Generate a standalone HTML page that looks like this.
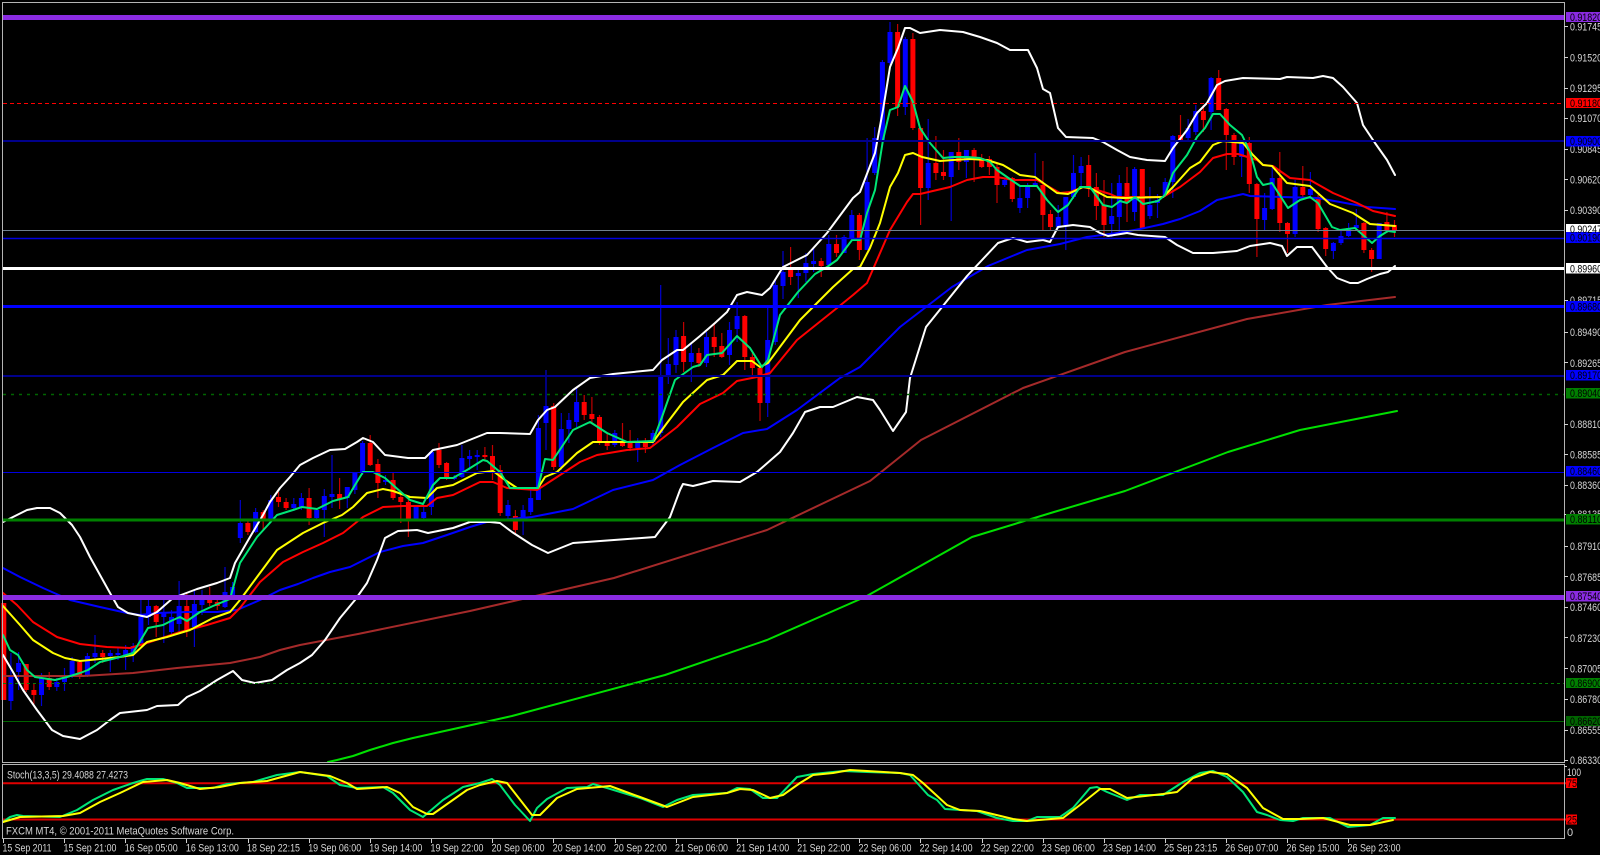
<!DOCTYPE html>
<html><head><meta charset="utf-8"><title>FXCM MT4 chart</title>
<style>
html,body{margin:0;padding:0;background:#000;width:1600px;height:855px;overflow:hidden}
svg{display:block;position:absolute;left:0;top:0}
text{font-family:"Liberation Sans",sans-serif;font-size:11px}
.l{fill:none;stroke-linejoin:round;stroke-linecap:round}
.p{fill:#d6d6d6}
.t{fill:#d6d6d6}
.b{fill:#000}
</style></head><body>
<svg width="1600" height="855" viewBox="0 0 1600 855" xmlns="http://www.w3.org/2000/svg">
<rect width="1600" height="855" fill="#000"/>

<!-- wicks -->
<path fill="none" stroke="#0000d0" stroke-width="1.2" d="M10.9 653V710M18.6 652V690M41.5 673V706M56.8 678V691M64.5 668V691M72.1 657V678M87.4 653V677M95 635V663M110.3 650V672M118 648V660M125.6 645V670M133.2 643V662M140.9 600V645M148.5 600V625M163.8 600V643M171.5 610V635M179.1 581V632M194.4 590V647M202 590V615M225 567V608M232.6 582V600M240.3 500V543M255.6 508V533M270.8 495V522M293.8 498V511M301.4 493V510M316.7 508V519M324.3 489V537M332 455V508M347.3 487V508M354.9 473V494M362.6 441V475M385.5 475V485M416.1 505V520M423.7 507V519M431.4 450V515M454.3 475V480M461.9 445V478M469.6 450V470M477.2 450V470M508 500V520M523.1 505V535M530.7 490V515M538.4 415V500M546 370V450M561.3 413V470M568.9 413V443M576.6 387V427M614.8 430V447M637.7 438V462M653 430V445M660.7 285V437M668.3 338V384M676 330V373M691.3 342V382M706.5 332V367M729.5 322V365M737.1 302V342M767.7 308V417M775.3 280V345M783 251V299M798.3 267V298M805.9 253V282M813.6 247V272M828.8 235V270M844.1 235V253M851.8 210V240M867.1 138V250M874.7 127V175M882.4 60V142M890 22V65M905.3 37V115M928.2 119V200M951.2 152V221M966.4 150V178M1004.7 178V187M1019.9 187V213M1027.6 183V208M1035.2 153V187M1058.2 205V229M1065.8 197V250M1073.5 155V199M1081.1 157V187M1111.7 183V237M1119.3 175V235M1134.6 167V221M1149.9 187V219M1157.5 194V218M1165.2 178V197M1172.8 135V198M1188.1 119V140M1195.8 105V135M1211.1 77V130M1241.6 143V177M1264.6 193V230M1272.2 167V210M1295.1 180V237M1310.4 172V197M1333.4 242V259M1341 230V245M1348.6 223V237M1356.3 209V228M1379.2 223V259"/>
<path fill="none" stroke="#c00000" stroke-width="1.2" d="M26.2 664V692M33.9 683V704M49.2 672V690M79.7 660V679M102.7 650V663M156.2 605V637M186.8 593V637M209.7 587V606M217.3 598V610M247.9 520V535M263.2 510V531M278.5 492V507M286.1 498V510M309.1 488V525M339.6 478V509M370.2 435V466M377.9 459V498M393.1 473V500M400.8 495V523M408.4 500V537M439 443V468M446.6 462V480M484.9 447V460M492.5 445V480M500.2 465V516M515.4 510V535M553.7 403V470M584.2 395V420M591.9 397V423M599.5 415V445M607.2 433V450M622.5 423V447M630.1 430V451M645.4 438V453M683.6 322V372M698.9 348V367M714.2 324V357M721.8 333V358M744.8 315V370M752.4 353V375M760 367V421M790.6 247V285M821.2 258V277M836.5 235V257M859.4 213V260M897.6 24V116M912.9 33V130M920.6 127V225M935.9 136V180M943.5 150V180M958.8 138V170M974.1 148V182M981.7 154V168M989.4 156V175M997 163V203M1012.3 177V202M1042.9 161V230M1050.5 210V230M1088.7 155V197M1096.4 173V220M1104 180V237M1127 167V222M1142.3 169V229M1180.5 115V142M1203.4 105V132M1218.7 70V110M1226.3 108V170M1234 133V165M1249.3 137V193M1256.9 183V257M1279.8 152V232M1287.5 222V253M1302.8 166V197M1318.1 195V232M1325.7 227V256M1363.9 222V253M1371.6 248V272M1386.9 212V233M1394.5 220V237"/>
<!-- bodies -->
<path fill="none" stroke="#0000ff" stroke-width="5" d="M10.9 675V701M18.6 663V672M41.5 678V695M56.8 682V687M64.5 677V682M72.1 661V675M87.4 656V675M95 653V657M110.3 653V656M118 653V655M125.6 650V655M133.2 646V653M140.9 617V643M148.5 606V617M163.8 613V617M171.5 617V632M179.1 606V624M194.4 604V627M202 598V605M225 592V607M232.6 587V595M240.3 523V538M255.6 512V532M270.8 500V520M293.8 504V508M301.4 498V507M316.7 510V518M324.3 496V510M332 494V497M347.3 487V498M354.9 473V490M362.6 443V473M385.5 480V482M416.1 507V519M423.7 512V518M431.4 452V507M454.3 477V479M461.9 458V477M469.6 456V459M477.2 455V457M508 505V516M523.1 510V520M530.7 498V512M538.4 428V500M546 406V423M561.3 429V467M568.9 420V429M576.6 402V422M614.8 433V445M637.7 443V448M653 433V442M660.7 375V433M668.3 364V376M676 337V365M691.3 353V362M706.5 337V363M729.5 330V355M737.1 316V329M767.7 340V403M775.3 285V342M783 272V286M798.3 273V276M805.9 263V273M813.6 261V264M828.8 244V265M844.1 237V253M851.8 215V238M867.1 182V250M874.7 138V173M882.4 62V140M890 32V63M905.3 39V107M928.2 163V188M951.2 152V177M966.4 150V162M1004.7 180V185M1019.9 198V208M1027.6 187V198M1035.2 183V187M1058.2 217V227M1065.8 197V225M1073.5 173V197M1081.1 166V173M1111.7 216V224M1119.3 183V217M1134.6 169V212M1149.9 205V216M1157.5 200V203M1165.2 182V195M1172.8 136V182M1188.1 128V138M1195.8 111V132M1211.1 78V112M1241.6 143V157M1264.6 208V220M1272.2 178V209M1295.1 187V234M1310.4 189V195M1333.4 243V251M1341 236V243M1348.6 228V236M1356.3 225V228M1379.2 223V259"/>
<path fill="none" stroke="#ff0000" stroke-width="5" d="M3.8 603V700M26.2 664V690M33.9 690V695M49.2 678V687M79.7 662V675M102.7 653V657M156.2 606V622M186.8 606V630M209.7 598V603M217.3 602V606M247.9 523V532M263.2 512V520M278.5 497V502M286.1 502V508M309.1 498V518M339.6 494V499M370.2 443V465M377.9 464V483M393.1 480V498M400.8 497V502M408.4 502V519M439 450V465M446.6 463V478M484.9 455V457M492.5 456V470M500.2 470V513M515.4 516V530M553.7 406V467M584.2 402V415M591.9 414V419M599.5 417V442M607.2 441V446M622.5 442V446M630.1 443V448M645.4 443V447M683.6 336V362M698.9 353V363M714.2 337V347M721.8 346V357M744.8 316V357M752.4 357V368M760 368V403M790.6 267V277M821.2 261V266M836.5 244V253M859.4 215V250M897.6 32V107M912.9 39V128M920.6 128V188M935.9 163V173M943.5 172V176M958.8 152V162M974.1 150V158M981.7 158V167M989.4 159V167M997 167V185M1012.3 178V199M1042.9 185V215M1050.5 214V227M1088.7 165V187M1096.4 187V206M1104 205V225M1127 183V203M1142.3 169V228M1180.5 135V140M1203.4 111V120M1218.7 78V110M1226.3 109V135M1234 135V157M1249.3 143V184M1256.9 184V219M1279.8 178V223M1287.5 223V234M1302.8 187V195M1318.1 197V229M1325.7 228V249M1363.9 223V250M1371.6 250V259M1386.9 222V230M1394.5 225V231"/>

<!-- long MAs -->
<polyline class="l" stroke="#00e000" stroke-width="2" points="328,762 337,760 353,756 370,750 393,743 413,738 512,716 665,675 767,640 865,597 972,537 1054,512 1125,491 1228,452 1300,430 1397,411"/>
<polyline class="l" stroke="#a52a2a" stroke-width="2" points="3,676 33,676 83,676 133,673 177,668 230,663 260,657 280,650 300,645 358,634 470,611 614,578 767,530 870,481 921,440 1023,388 1125,352 1247,319 1327,305 1395,297"/>
<polyline class="l" stroke="#0000ff" stroke-width="2" points="3,568 20,577 43,588 70,600 100,607 127,613 140,615 157,613 187,612 217,612 237,610 260,600 280,590 298,584 313,578 330,572 350,567 380,552 403,546 423,543 447,535 470,527 490,521 532,517 573,509 613,490 653,480 680,465 713,448 743,433 767,429 797,410 840,378 860,367 877,350 900,327 926,307 952,287 988,266 1027,250 1060,244 1087,237 1110,234 1123,232 1140,229 1163,224 1180,219 1200,211 1217,200 1243,194 1250,196 1317,198 1340,202 1367,207 1395,209"/>
<!-- Bollinger -->
<polyline class="l" stroke="#fff" stroke-width="2" points="3,522 13,517 27,510 37,508 50,508 60,513 72,525 80,537 90,557 100,575 110,593 118,607 128,613 147,617 157,612 173,598 197,589 217,583 230,578 235,563 250,537 263,515 270,502 280,488 290,477 300,465 313,458 330,450 345,449 357,442 363,438 373,442 385,455 408,458 425,458 433,450 457,445 487,433 500,433 530,434 538,420 547,410 555,407 573,390 590,378 613,374 653,370 662,360 677,350 683,350 700,336 715,323 727,312 737,295 747,292 762,295 770,288 783,267 807,255 827,233 853,198 860,192 875,153 883,110 890,67 898,48 905,28 910,28 920,33 940,30 963,32 980,37 997,43 1010,50 1028,50 1037,68 1043,89 1050,93 1058,128 1066,137 1093,138 1103,142 1117,150 1130,157 1147,160 1165,161 1173,148 1187,130 1197,113 1207,103 1217,85 1225,81 1243,78 1280,79 1287,77 1313,78 1323,76 1333,78 1343,87 1357,103 1363,125 1375,143 1387,160 1395,175"/>
<polyline class="l" stroke="#fff" stroke-width="2" points="3,655 13,672 23,690 37,710 52,730 63,736 80,739 97,730 110,720 120,713 147,710 157,706 178,705 187,697 200,691 217,680 233,671 242,680 255,683 272,680 287,670 300,663 312,655 325,640 340,618 355,600 367,583 377,560 385,538 398,531 417,530 428,533 453,528 470,522 490,522 500,523 512,532 532,545 548,553 573,543 614,540 655,537 670,517 680,490 683,484 693,486 713,481 740,482 757,472 780,452 793,433 805,412 820,407 833,407 857,397 873,400 880,410 893,431 906,412 910,378 926,327 967,276 998,243 1013,238 1027,242 1043,240 1050,242 1058,227 1073,225 1090,227 1100,233 1108,236 1127,233 1138,235 1165,237 1177,245 1193,253 1213,253 1237,251 1250,246 1270,243 1282,246 1287,256 1297,247 1312,247 1327,267 1337,278 1350,283 1358,283 1367,279 1380,274 1388,272 1395,266"/>
<!-- fast MAs -->
<polyline class="l" stroke="#ff0000" stroke-width="2" points="3,593 17,605 33,622 57,637 80,644 107,647 130,648 147,643 180,632 207,625 230,618 240,608 260,582 283,562 303,552 323,543 343,533 363,517 383,507 403,506 427,506 437,498 453,495 480,482 493,482 507,488 537,490 557,477 580,462 597,455 627,450 650,448 677,427 700,404 723,393 737,381 757,377 770,373 797,340 837,308 853,295 867,283 877,260 890,230 907,202 913,194 920,194 950,187 967,180 983,177 997,177 1013,180 1037,180 1060,193 1070,192 1083,187 1097,190 1110,194 1117,197 1163,197 1180,187 1200,172 1213,158 1227,154 1238,154 1257,160 1263,165 1273,166 1290,178 1310,180 1333,193 1357,203 1373,211 1395,216"/>
<polyline class="l" stroke="#ffff00" stroke-width="2" points="3,606 20,625 33,640 53,653 65,658 80,661 100,659 120,657 133,655 147,642 167,637 190,630 213,618 230,612 240,600 257,577 277,550 303,533 323,523 342,515 353,507 367,493 383,489 393,491 410,497 427,498 437,488 453,485 477,473 493,471 505,480 517,488 538,488 545,477 557,472 577,453 593,442 627,442 653,442 667,423 683,402 707,380 723,375 737,361 752,361 760,367 768,363 800,320 833,287 853,269 860,267 870,248 880,223 890,187 898,173 905,155 913,153 922,157 940,161 953,160 970,159 987,160 1003,165 1020,175 1035,177 1057,193 1068,194 1083,187 1090,188 1107,197 1123,198 1163,197 1173,187 1190,168 1200,162 1213,145 1223,141 1243,143 1253,155 1263,165 1272,166 1287,183 1310,186 1330,204 1353,213 1370,224 1395,226"/>
<polyline class="l" stroke="#00e676" stroke-width="2" points="3,635 10,650 18,655 27,670 35,677 55,680 67,677 80,673 88,670 100,662 120,657 133,653 148,628 163,625 173,620 180,617 187,621 200,612 213,606 230,599 240,563 257,537 277,515 293,510 302,507 317,509 333,501 348,497 355,485 363,472 373,472 385,478 402,493 410,500 423,504 433,485 440,478 453,478 467,470 483,460 487,461 500,472 510,488 538,488 545,459 553,460 573,430 590,422 607,433 627,442 653,441 662,417 675,380 693,367 700,365 707,355 722,353 737,336 750,348 762,367 768,360 780,315 798,292 815,274 827,267 837,260 852,240 860,240 867,213 875,190 883,140 890,110 898,107 905,86 913,102 920,128 930,143 943,158 953,157 967,157 980,158 990,162 997,170 1007,177 1020,186 1037,186 1047,200 1058,212 1068,205 1080,187 1090,187 1103,205 1112,207 1120,201 1127,203 1135,197 1143,204 1158,201 1165,195 1173,173 1187,155 1197,137 1205,128 1213,114 1220,114 1230,125 1242,135 1250,152 1257,177 1263,185 1272,183 1288,208 1300,200 1310,197 1318,203 1332,227 1340,230 1355,228 1372,243 1380,236 1388,231 1395,232"/>

<!-- horizontal objects -->
<g fill="none">
<path d="M3 17.5H1564" stroke="#8a2be2" stroke-width="5"/>
<path d="M3 103.5H1564" stroke="#ff0000" stroke-width="1" stroke-dasharray="4 3"/>
<path d="M3 141H1564" stroke="#00008b" stroke-width="2"/>
<path d="M3 230.5H1564" stroke="#708090" stroke-width="1"/>
<path d="M3 238.5H1564" stroke="#0000e0" stroke-width="1.4"/>
<path d="M3 268.5H1564" stroke="#fff" stroke-width="3"/>
<path d="M3 306.5H1564" stroke="#0000ff" stroke-width="3"/>
<path d="M3 376H1564" stroke="#00008b" stroke-width="2"/>
<path d="M3 394.5H1564" stroke="#006400" stroke-width="1.4" stroke-dasharray="3 5"/>
<path d="M3 472.5H1564" stroke="#0000e0" stroke-width="1"/>
<path d="M3 520H1564" stroke="#008000" stroke-width="3"/>
<path d="M3 597.5H1564" stroke="#8a2be2" stroke-width="5"/>
<path d="M3 683.5H1564" stroke="#0a780a" stroke-width="1" stroke-dasharray="3 3"/>
<path d="M3 721.5H1564" stroke="#006400" stroke-width="1"/>
</g>

<!-- stochastic -->
<path fill="none" stroke="#e00000" stroke-width="2" d="M3 783.3H1566M3 819.5H1566"/>
<polyline class="l" stroke="#00e676" stroke-width="2" points="3,822 10,817 17,815 23,816 60,817 77,810 93,800 113,790 133,783 147,779 163,779 177,783 187,788 213,788 227,784 253,782 277,775 300,772 327,776 340,785 357,788 383,787 393,793 400,800 410,810 423,817 443,800 463,787 480,783 492,779 500,785 515,805 530,821 537,808 547,799 567,788 587,787 593,784 607,788 640,798 663,807 677,800 693,795 727,793 737,788 750,789 763,798 777,798 797,777 813,774 843,771 867,772 900,773 910,775 928,795 937,800 945,809 977,811 997,818 1013,821 1027,821 1037,817 1060,817 1073,808 1090,788 1097,787 1107,792 1127,800 1140,795 1163,795 1183,782 1200,773 1213,771 1227,777 1243,792 1257,812 1267,815 1280,820 1293,821 1303,818 1330,818 1348,827 1370,825 1383,818 1395,818"/>
<polyline class="l" stroke="#ffff00" stroke-width="2" points="3,822 20,817 63,816 80,813 100,802 120,793 143,782 167,780 180,783 200,789 220,787 240,783 267,781 300,772 330,776 347,783 357,789 387,787 400,793 413,807 427,814 433,814 467,790 480,785 497,781 507,783 532,815 540,815 557,798 577,789 610,786 640,797 667,807 693,797 727,793 740,789 753,790 770,798 783,795 800,783 813,775 833,773 850,770 867,771 900,773 913,775 923,783 947,805 960,810 980,811 1013,819 1027,821 1063,818 1080,805 1100,789 1110,789 1127,798 1163,794 1177,792 1193,778 1210,772 1227,774 1247,788 1263,808 1283,819 1300,819 1323,818 1350,825 1370,825 1393,820"/>

<!-- frames -->
<g fill="none" stroke="#b4b4b4" stroke-width="1">
<path d="M2.5 2.5H1564.5V762.5H2.5Z"/>
<path d="M2.5 764.5H1564.5V838.5H2.5Z"/>
</g>
<path fill="none" stroke="#d0d0d0" d="M1564 26.5h4M1564 57.5h4M1564 88.5h4M1564 118.5h4M1564 149.5h4M1564 179.5h4M1564 210.5h4M1564 300.5h4M1564 332.5h4M1564 362.5h4M1564 424.5h4M1564 454.5h4M1564 485.5h4M1564 514.5h4M1564 546.5h4M1564 576.5h4M1564 607.5h4M1564 637.5h4M1564 668.5h4M1564 699.5h4M1564 730.5h4M1564 760.5h4M1564 766.5h3M3.5 839v4M64.5 839v4M125.5 839v4M186.5 839v4M248.5 839v4M309.5 839v4M370.5 839v4M431.5 839v4M492.5 839v4M553.5 839v4M615.5 839v4M676.5 839v4M737.5 839v4M798.5 839v4M859.5 839v4M920.5 839v4M982.5 839v4M1043.5 839v4M1104.5 839v4M1165.5 839v4M1226.5 839v4M1287.5 839v4M1348.5 839v4"/>

<!-- axis prices -->
<g class="p">
<text x="1570" y="30.5" textLength="32" lengthAdjust="spacingAndGlyphs">0.91745</text>
<text x="1570" y="61.5" textLength="32" lengthAdjust="spacingAndGlyphs">0.91520</text>
<text x="1570" y="92" textLength="32" lengthAdjust="spacingAndGlyphs">0.91295</text>
<text x="1570" y="122" textLength="32" lengthAdjust="spacingAndGlyphs">0.91070</text>
<text x="1570" y="153" textLength="32" lengthAdjust="spacingAndGlyphs">0.90845</text>
<text x="1570" y="183.5" textLength="32" lengthAdjust="spacingAndGlyphs">0.90620</text>
<text x="1570" y="214" textLength="32" lengthAdjust="spacingAndGlyphs">0.90390</text>
<text x="1570" y="304" textLength="32" lengthAdjust="spacingAndGlyphs">0.89715</text>
<text x="1570" y="336" textLength="32" lengthAdjust="spacingAndGlyphs">0.89490</text>
<text x="1570" y="367" textLength="32" lengthAdjust="spacingAndGlyphs">0.89265</text>
<text x="1570" y="428" textLength="32" lengthAdjust="spacingAndGlyphs">0.88810</text>
<text x="1570" y="458.5" textLength="32" lengthAdjust="spacingAndGlyphs">0.88585</text>
<text x="1570" y="489" textLength="32" lengthAdjust="spacingAndGlyphs">0.88360</text>
<text x="1570" y="518" textLength="32" lengthAdjust="spacingAndGlyphs">0.88135</text>
<text x="1570" y="550" textLength="32" lengthAdjust="spacingAndGlyphs">0.87910</text>
<text x="1570" y="581" textLength="32" lengthAdjust="spacingAndGlyphs">0.87685</text>
<text x="1570" y="611" textLength="32" lengthAdjust="spacingAndGlyphs">0.87460</text>
<text x="1570" y="642" textLength="32" lengthAdjust="spacingAndGlyphs">0.87230</text>
<text x="1570" y="672.5" textLength="32" lengthAdjust="spacingAndGlyphs">0.87005</text>
<text x="1570" y="703" textLength="32" lengthAdjust="spacingAndGlyphs">0.86780</text>
<text x="1570" y="734" textLength="32" lengthAdjust="spacingAndGlyphs">0.86555</text>
<text x="1570" y="764" textLength="32" lengthAdjust="spacingAndGlyphs">0.86330</text>
<text x="1567" y="776" textLength="14" lengthAdjust="spacingAndGlyphs">100</text>
<text x="1567" y="836">0</text>
</g>
<!-- axis boxes -->
<g>
<rect x="1566" y="12" width="34" height="10" fill="#8a2be2"/>
<rect x="1566" y="98" width="34" height="10" fill="#ff0000"/>
<rect x="1566" y="136" width="34" height="10.5" fill="#0000ff"/>
<rect x="1566" y="224" width="34" height="10" fill="#ffffff"/>
<rect x="1566" y="232" width="34" height="11" fill="#0000ff"/>
<rect x="1566" y="263" width="34" height="10.5" fill="#ffffff"/>
<rect x="1566" y="301" width="34" height="11" fill="#0000ff"/>
<rect x="1566" y="370" width="34" height="10.5" fill="#0000ff"/>
<rect x="1566" y="388" width="34" height="10.5" fill="#008000"/>
<rect x="1566" y="466" width="34" height="10.5" fill="#0000ff"/>
<rect x="1566" y="514" width="34" height="10.5" fill="#008000"/>
<rect x="1566" y="591" width="34" height="10.5" fill="#8a2be2"/>
<rect x="1566" y="678" width="34" height="10" fill="#008000"/>
<rect x="1566" y="716" width="34" height="10" fill="#006400"/>
<rect x="1566" y="778" width="11" height="10" fill="#ff0000"/>
<rect x="1566" y="814.5" width="11" height="10" fill="#ff0000"/>
</g>
<g class="b">
<text x="1570" y="21" textLength="32" lengthAdjust="spacingAndGlyphs">0.91820</text>
<text x="1570" y="107" textLength="32" lengthAdjust="spacingAndGlyphs">0.91180</text>
<text x="1570" y="145" textLength="32" lengthAdjust="spacingAndGlyphs">0.90900</text>
<text x="1570" y="233" textLength="32" lengthAdjust="spacingAndGlyphs">0.90247</text>
<text x="1570" y="241.5" textLength="32" lengthAdjust="spacingAndGlyphs">0.90190</text>
<text x="1570" y="272.5" textLength="32" lengthAdjust="spacingAndGlyphs">0.89960</text>
<text x="1570" y="310.5" textLength="32" lengthAdjust="spacingAndGlyphs">0.89680</text>
<text x="1570" y="379" textLength="32" lengthAdjust="spacingAndGlyphs">0.89170</text>
<text x="1570" y="397" textLength="32" lengthAdjust="spacingAndGlyphs">0.89040</text>
<text x="1570" y="475" textLength="32" lengthAdjust="spacingAndGlyphs">0.88460</text>
<text x="1570" y="523" textLength="32" lengthAdjust="spacingAndGlyphs">0.88110</text>
<text x="1570" y="600" textLength="32" lengthAdjust="spacingAndGlyphs">0.87540</text>
<text x="1570" y="687" textLength="32" lengthAdjust="spacingAndGlyphs">0.86900</text>
<text x="1570" y="725" textLength="32" lengthAdjust="spacingAndGlyphs">0.86620</text>
<text x="1567" y="787" textLength="10" lengthAdjust="spacingAndGlyphs">75</text>
<text x="1567" y="823.5" textLength="10" lengthAdjust="spacingAndGlyphs">25</text>
</g>

<!-- chart labels -->
<g class="t">
<text x="7" y="778.5" textLength="121" lengthAdjust="spacingAndGlyphs">Stoch(13,3,5) 29.4088 27.4273</text>
<text x="6" y="834.5" textLength="228" lengthAdjust="spacingAndGlyphs">FXCM MT4, © 2001-2011 MetaQuotes Software Corp.</text>
<text x="2.5" y="851.5" textLength="49" lengthAdjust="spacingAndGlyphs">15 Sep 2011</text>
<text x="63.5" y="851.5" textLength="53" lengthAdjust="spacingAndGlyphs">15 Sep 21:00</text>
<text x="124.7" y="851.5" textLength="53" lengthAdjust="spacingAndGlyphs">16 Sep 05:00</text>
<text x="185.9" y="851.5" textLength="53" lengthAdjust="spacingAndGlyphs">16 Sep 13:00</text>
<text x="247" y="851.5" textLength="53" lengthAdjust="spacingAndGlyphs">18 Sep 22:15</text>
<text x="308.2" y="851.5" textLength="53" lengthAdjust="spacingAndGlyphs">19 Sep 06:00</text>
<text x="369.3" y="851.5" textLength="53" lengthAdjust="spacingAndGlyphs">19 Sep 14:00</text>
<text x="430.5" y="851.5" textLength="53" lengthAdjust="spacingAndGlyphs">19 Sep 22:00</text>
<text x="491.6" y="851.5" textLength="53" lengthAdjust="spacingAndGlyphs">20 Sep 06:00</text>
<text x="552.8" y="851.5" textLength="53" lengthAdjust="spacingAndGlyphs">20 Sep 14:00</text>
<text x="613.9" y="851.5" textLength="53" lengthAdjust="spacingAndGlyphs">20 Sep 22:00</text>
<text x="675" y="851.5" textLength="53" lengthAdjust="spacingAndGlyphs">21 Sep 06:00</text>
<text x="736.2" y="851.5" textLength="53" lengthAdjust="spacingAndGlyphs">21 Sep 14:00</text>
<text x="797.3" y="851.5" textLength="53" lengthAdjust="spacingAndGlyphs">21 Sep 22:00</text>
<text x="858.5" y="851.5" textLength="53" lengthAdjust="spacingAndGlyphs">22 Sep 06:00</text>
<text x="919.6" y="851.5" textLength="53" lengthAdjust="spacingAndGlyphs">22 Sep 14:00</text>
<text x="980.8" y="851.5" textLength="53" lengthAdjust="spacingAndGlyphs">22 Sep 22:00</text>
<text x="1041.9" y="851.5" textLength="53" lengthAdjust="spacingAndGlyphs">23 Sep 06:00</text>
<text x="1103" y="851.5" textLength="53" lengthAdjust="spacingAndGlyphs">23 Sep 14:00</text>
<text x="1164.2" y="851.5" textLength="53" lengthAdjust="spacingAndGlyphs">25 Sep 23:15</text>
<text x="1225.3" y="851.5" textLength="53" lengthAdjust="spacingAndGlyphs">26 Sep 07:00</text>
<text x="1286.5" y="851.5" textLength="53" lengthAdjust="spacingAndGlyphs">26 Sep 15:00</text>
<text x="1347.6" y="851.5" textLength="53" lengthAdjust="spacingAndGlyphs">26 Sep 23:00</text>
</g>
</svg>
</body></html>
